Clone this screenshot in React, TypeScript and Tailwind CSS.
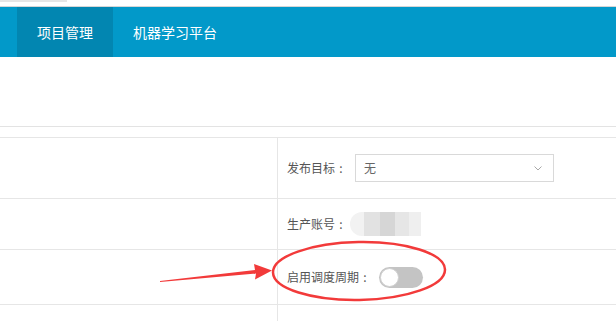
import React from "react";

const font = { fontFamily: '"Noto Sans CJK SC", "Microsoft YaHei", sans-serif' };

function Row({
  h,
  children,
}: {
  h: string;
  children?: React.ReactNode;
}) {
  return (
    <div className={`flex border-b border-[#e6e6e6] ${h}`}>
      <div className="w-[278px] shrink-0 border-r border-[#e6e6e6]" />
      <div className="flex flex-1 items-center pl-[9px]">{children}</div>
    </div>
  );
}

function Label({ text }: { text: string }) {
  return (
    <span className="flex items-center">
      {text}
      <span className="w-[12px] text-center">:</span>
    </span>
  );
}

export default function App() {
  return (
    <div
      className="relative h-[321px] w-[616px] overflow-hidden bg-white"
      style={font}
    >
      {/* top strip */}
      <div className="h-[7px] border-b border-[#d6d6d6]">
        <div className="h-[2px] w-[67px] bg-[#e6e6e6]" />
      </div>

      {/* nav bar */}
      <div className="flex h-[50px] bg-[#0299c9] pl-[17px] text-[14px] text-white">
        <div className="flex w-[96px] items-center justify-center bg-[#0286b1]">
          项目管理
        </div>
        <div className="flex items-center px-[20px]">机器学习平台</div>
      </div>

      <div className="h-[70px] border-b border-[#e3e3e3]" />
      <div className="h-[11px] border-b border-[#e6e6e6]" />

      <div className="text-[12px] text-[#555]">
        <Row h="h-[61px]">
          <Label text="发布目标" />
          <div className="ml-[8px] flex h-[28px] w-[199px] items-center justify-between border border-[#d9d9d9] pl-[8px] pr-[11px] text-[#666]">
            <span>无</span>
            <svg width="8" height="5" viewBox="0 0 8 5" fill="none">
              <path d="M0.5 0.5 L4 4 L7.5 0.5" stroke="#a8a8a8" strokeWidth="1" />
            </svg>
          </div>
        </Row>
        <Row h="h-[51px]">
          <Label text="生产账号" />
          {/* blurred value */}
          <div className="ml-[3px] flex h-[24px] items-stretch">
            <div className="w-[14px] rounded-l-full bg-[#f2f2f2]" />
            <div className="w-[16px] bg-[#e2e2e2]" />
            <div className="w-[15px] bg-[#d6d6d6]" />
            <div className="w-[14px] bg-[#e6e6e6]" />
            <div className="w-[12px] bg-[#efefef]" />
          </div>
        </Row>
        <Row h="h-[55px]">
          <Label text="启用调度周期" />
          <div className="ml-[8px] flex h-[21px] w-[44px] items-center rounded-full bg-[#c4c4c4] pl-[1px]">
            <div className="h-[19px] w-[19px] rounded-full border border-[#d0d0d0] bg-white" />
          </div>
        </Row>
        <Row h="h-[20px]" />
      </div>

      {/* red annotation */}
      <svg
        className="pointer-events-none absolute left-0 top-0"
        width="616"
        height="321"
        viewBox="0 0 616 321"
      >
        <ellipse
          cx="359"
          cy="271"
          rx="86"
          ry="29"
          transform="rotate(-1 359 271)"
          fill="none"
          stroke="#f23a3a"
          strokeWidth="2.5"
        />
        <polygon
          points="160,282 256,273.5 255,279.5 272,270.5 254,264 255,270 160,281"
          fill="#f23a3a"
        />
      </svg>
    </div>
  );
}
